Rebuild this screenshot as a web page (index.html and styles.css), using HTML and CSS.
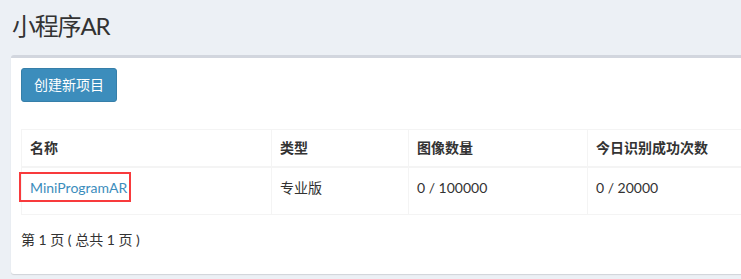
FILE: index.html
```html
<!DOCTYPE html>
<html lang="zh">
<head>
<meta charset="utf-8">
<title>小程序AR</title>
<link rel="stylesheet" href="styles.css">
</head>
<body>
<div class="page">
  <h1 class="title">小程序AR</h1>
  <div class="box">
    <button class="btn">创建新项目</button>
    <table class="grid">
      <thead>
        <tr>
          <th class="c1">名称</th>
          <th class="c2">类型</th>
          <th class="c3">图像数量</th>
          <th class="c4">今日识别成功次数</th>
        </tr>
      </thead>
      <tbody>
        <tr>
          <td><a class="link" href="#">MiniProgramAR</a></td>
          <td>专业版</td>
          <td>0 / 100000</td>
          <td>0 / 20000</td>
        </tr>
      </tbody>
    </table>
    <div class="pager">第 1 页 ( 总共 1 页 )</div>
  </div>
</div>
</body>
</html>
```

FILE: styles.css
```css
html, body {
  margin: 0;
  padding: 0;
  overflow: hidden;
}
body {
  background: #ecf0f5;
  font-family: "Lato", "Noto Sans CJK SC", sans-serif;
  font-size: 14px;
  line-height: 20px;
  color: #333;
  width: 741px;
  height: 279px;
}
.page {
  padding: 13px 0 0 11px;
  width: 900px;
}
.title {
  margin: 0 0 0 1px;
  font-size: 24px;
  line-height: 26px;
  font-weight: 400;
  letter-spacing: -1.2px;
  color: #333;
  height: 42px;
}
.box {
  background: #fff;
  border-top: 3px solid #d2d6de;
  border-radius: 3px;
  box-shadow: 0 1px 1px rgba(0,0,0,0.12);
  padding: 10px;
  box-sizing: border-box;
  height: 219px;
}
.btn {
  display: block;
  font-family: inherit;
  font-size: 14px;
  line-height: 20px;
  color: #fff;
  background: #3c8dbc;
  border: 1px solid #367fa9;
  border-radius: 3px;
  padding: 6px 12px;
  width: 96px;
  height: 34px;
  cursor: pointer;
}
.grid {
  margin-top: 27px;
  border-collapse: collapse;
  border: 1px solid #f4f4f4;
  width: 860px;
}
.grid th, .grid td {
  border: 1px solid #f4f4f4;
  text-align: left;
  vertical-align: top;
}
.grid th {
  font-weight: 700;
  padding: 8px 8px;
  height: 20px;
  border-bottom: 2px solid #f4f4f4;
}
.grid td {
  padding: 10px 8px 16px;
}
.c1 { width: 233px; }
.c2 { width: 120px; }
.c3 { width: 162px; }
.link {
  color: #3c8dbc;
  text-decoration: none;
  position: relative;
  display: inline-block;
}
.link::after {
  content: "";
  position: absolute;
  left: -11px;
  top: -6px;
  width: 112px;
  height: 30px;
  box-sizing: border-box;
  border: 2px solid #f83a3c;
}
.pager {
  margin-top: 15px;
}
```
